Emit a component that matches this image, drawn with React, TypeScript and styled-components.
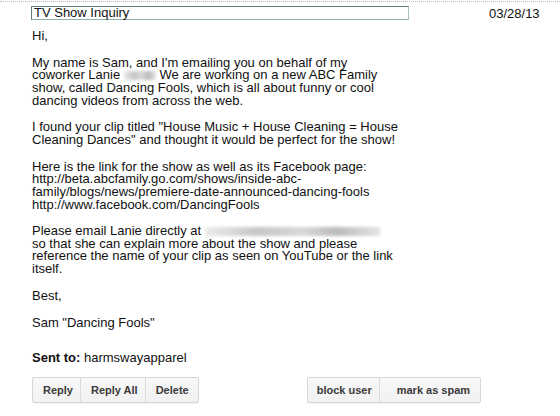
import React from 'react'
import styled, { createGlobalStyle } from 'styled-components'

const Global = createGlobalStyle`
  html, body {
    margin: 0;
    padding: 0;
    background: #fff;
  }
`

const Page = styled.div`
  width: 560px;
  height: 416px;
  overflow: hidden;
  font-family: 'Liberation Sans', Arial, Helvetica, sans-serif;
  font-size: 13px;
  color: #111;
  border-top: 1px dotted #bbb;
  margin-top: 1px;
  box-sizing: border-box;
  padding: 4px 0 0 31px;
`

const Header = styled.div`
  display: flex;
  align-items: center;
  height: 13px;
`

const Subject = styled.div`
  width: 374px;
  height: 12px;
  line-height: 12px;
  padding-left: 2px;
  border: 1px solid #5f7f80;
  border-right-color: #a8c4c4;
  border-bottom-color: #8fb0b0;
`

const Date = styled.div`
  margin-left: 80px;
  padding-top: 1px;
`

const Body = styled.div`
  padding: 11px 0 0 1px;
  line-height: 12.6px;
`

const Para = styled.p`
  margin: 0 0 14.2px;
`

const Blur = styled.span<{ w: number }>`
  display: inline-block;
  width: ${({ w }) => w}px;
  height: 9px;
  vertical-align: -1px;
  background: linear-gradient(90deg, #e8e8e8, #b9b9b9 30%, #cfcfcf 55%, #aaa 75%, #ddd);
  filter: blur(1.5px);
  opacity: 0.8;
`

const SentTo = styled.div`
  margin-top: 22px;
  line-height: 14px;
  b {
    font-weight: bold;
  }
`

const Actions = styled.div`
  display: flex;
  margin-top: 12px;
  gap: 108px;
`

const Group = styled.div`
  display: flex;
  border: 1px solid #d6d6d6;
  border-radius: 2px;
  background: linear-gradient(#f8f8f8, #f1f1f1);
  box-shadow: 0 1px 0 rgba(0, 0, 0, 0.04);
`

const Button = styled.button<{ pl?: number; pr?: number }>`
  font-family: 'Liberation Sans', Arial, Helvetica, sans-serif;
  font-size: 11px;
  font-weight: bold;
  color: #3a3a3a;
  background: transparent;
  border: none;
  border-left: 1px solid #dcdcdc;
  height: 24px;
  padding: 0 ${({ pr }) => pr ?? 7}px 0 ${({ pl }) => pl ?? 10}px;
  margin: 0;
  &:first-child {
    border-left: none;
  }
`

export default function App() {
  return (
    <Page>
      <Global />
      <Header>
        <Subject>TV Show Inquiry</Subject>
        <Date>03/28/13</Date>
      </Header>
      <Body>
        <Para>Hi,</Para>
        <Para>
          My name is Sam, and I'm emailing you on behalf of my
          <br />
          coworker Lanie <Blur w={32} /> We are working on a new ABC Family
          <br />
          show, called Dancing Fools, which is all about funny or cool
          <br />
          dancing videos from across the web.
        </Para>
        <Para>
          I found your clip titled "House Music + House Cleaning = House
          <br />
          Cleaning Dances" and thought it would be perfect for the show!
        </Para>
        <Para>
          Here is the link for the show as well as its Facebook page:
          <br />
          http://beta.abcfamily.go.com/shows/inside-abc-
          <br />
          family/blogs/news/premiere-date-announced-dancing-fools
          <br />
          http://www.facebook.com/DancingFools
        </Para>
        <Para>
          Please email Lanie directly at <Blur w={175} />
          <br />
          so that she can explain more about the show and please
          <br />
          reference the name of your clip as seen on YouTube or the link
          <br />
          itself.
        </Para>
        <Para>Best,</Para>
        <Para>Sam "Dancing Fools"</Para>
        <SentTo>
          <b>Sent to:</b> harmswayapparel
        </SentTo>
        <Actions>
          <Group>
            <Button>Reply</Button>
            <Button>Reply All</Button>
            <Button pr={9}>Delete</Button>
          </Group>
          <Group>
            <Button pl={9} pr={7}>block user</Button>
            <Button pl={17} pr={10}>mark as spam</Button>
          </Group>
        </Actions>
      </Body>
    </Page>
  )
}
